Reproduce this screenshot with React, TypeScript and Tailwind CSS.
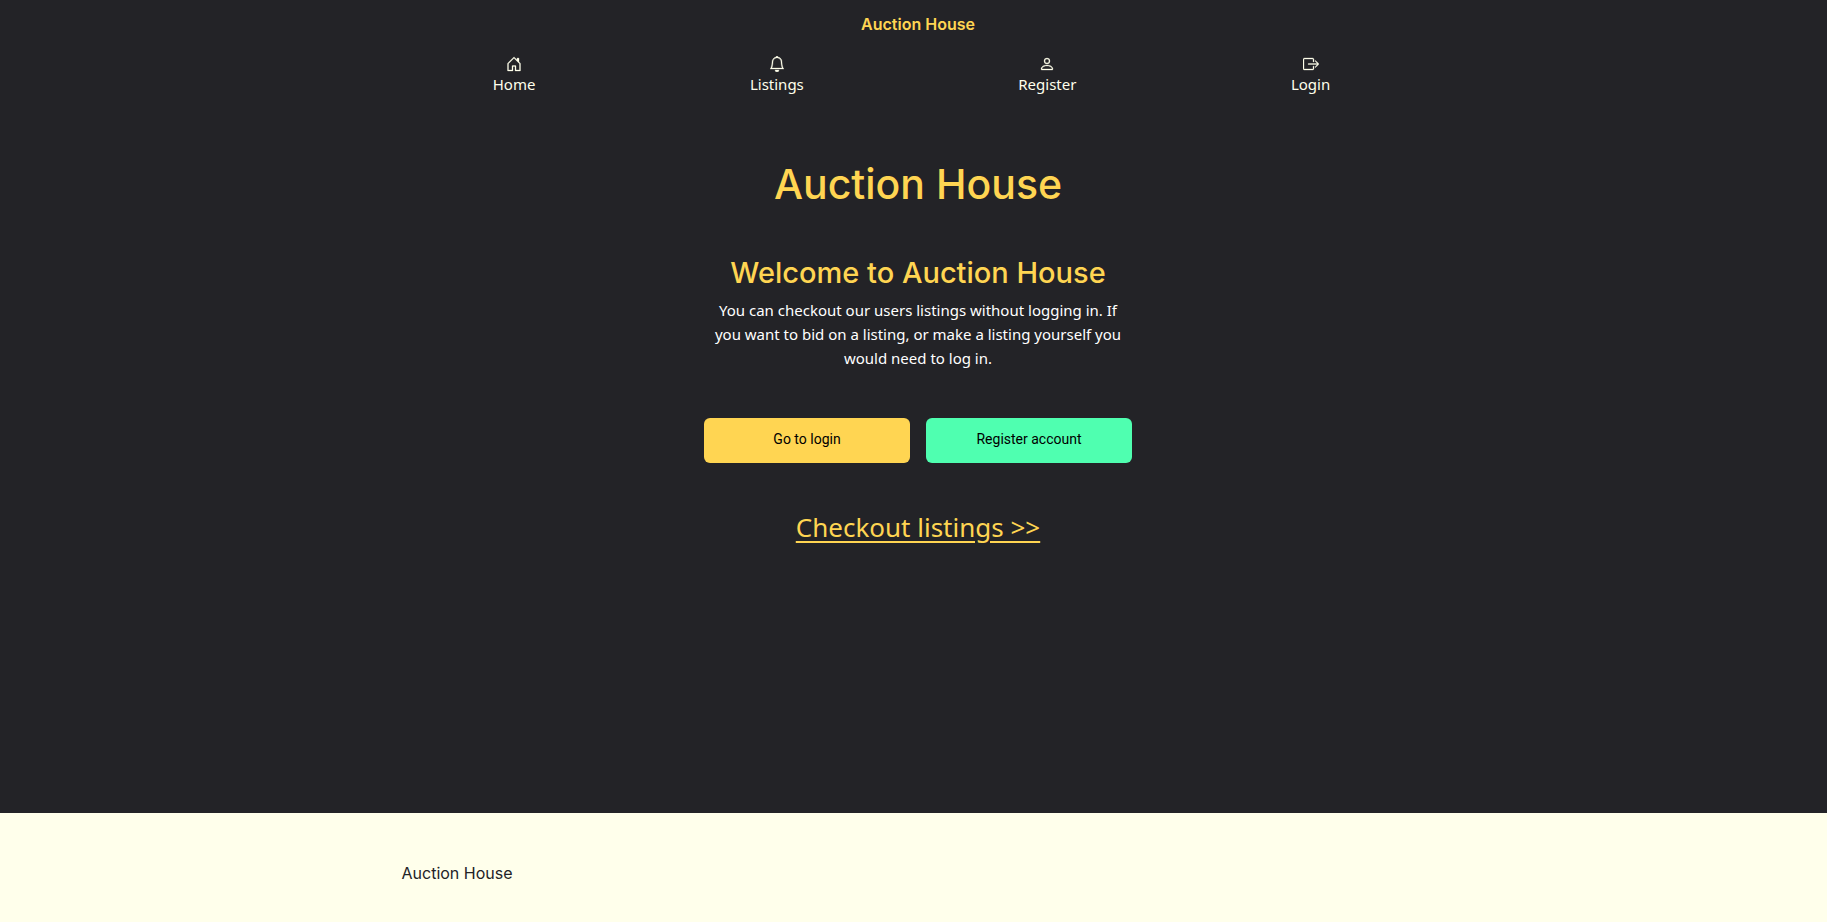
import React from "react";
import { BsBell, BsBoxArrowRight, BsHouseDoor, BsPerson } from "react-icons/bs";

const links = [
  { label: "Home", Icon: BsHouseDoor },
  { label: "Listings", Icon: BsBell },
  { label: "Register", Icon: BsPerson },
  { label: "Login", Icon: BsBoxArrowRight },
];

export default function App() {
  return (
    <div className="flex min-h-screen flex-col bg-[#232327] font-['Noto_Sans',sans-serif] text-[15px] leading-6 text-[#ffffeb]">
      <header>
        <a
          href="#home"
          className="block pt-3 pl-[9px] text-center font-['Inter',sans-serif] text-base font-semibold text-[#ffd552]"
        >
          Auction House
        </a>
        <nav className="mx-auto mt-5 flex max-w-[1056px] justify-around pr-1">
          {links.map(({ label, Icon }) => (
            <a key={label} href={`#${label.toLowerCase()}`} className="flex flex-col items-center">
              <Icon size={16} strokeWidth={0.3} aria-hidden="true" />
              <span>{label}</span>
            </a>
          ))}
        </nav>
      </header>

      <main className="flex flex-1 flex-col items-center pt-16 pb-16 pl-[9px] text-center">
        <h1 className="font-['Inter',sans-serif] text-[41px] leading-[48px] font-medium text-[#ffd552]">
          Auction House
        </h1>
        <section className="mt-12 w-full max-w-[428px]">
          <h2 className="font-['Inter',sans-serif] text-[29px] leading-[34px] font-medium text-[#ffd552]">
            Welcome to Auction House
          </h2>
          <p className="mt-2 px-2 text-white">
            You can checkout our users listings without logging in. If you want to bid on a listing, or make a listing
            yourself you would need to log in.
          </p>
          <div className="mt-12 grid grid-cols-2 gap-4 font-['Roboto',sans-serif] text-sm text-black">
            <button type="button" className="h-[45px] rounded-md bg-[#ffd552] pb-1">
              Go to login
            </button>
            <button type="button" className="h-[45px] rounded-md bg-[#4fffb0] pb-1">
              Register account
            </button>
          </div>
        </section>
        <a href="#listings" className="mt-[46px] text-[26px] leading-9 text-[#ffd552] underline underline-offset-4">
          Checkout listings &gt;&gt;
        </a>
      </main>

      <footer className="bg-[#ffffeb] text-[#232327]">
        <div className="mx-auto max-w-[1056px] px-4 pt-12 pb-[37px] font-['Inter',sans-serif] text-base">
          Auction House
        </div>
      </footer>
    </div>
  );
}
